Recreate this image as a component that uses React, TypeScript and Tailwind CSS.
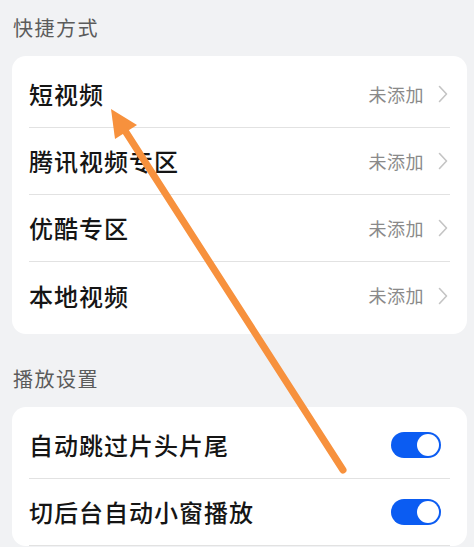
import React from 'react';

const FONT = { fontFamily: '"Noto Sans CJK SC", "Noto Sans", sans-serif' };

const shortcuts = ['短视频', '腾讯视频专区', '优酷专区', '本地视频'];
const playback = ['自动跳过片头片尾', '切后台自动小窗播放'];

const Chevron = () => (
  <svg width="10" height="18" viewBox="0 0 10 18" fill="none">
    <path d="M1.5 1.5 L8.5 9 L1.5 16.5" stroke="#c4c4c4" strokeWidth="1.6" strokeLinecap="round" strokeLinejoin="round" />
  </svg>
);

const Toggle = () => (
  <div className="w-[50px] h-[26px] rounded-full bg-[#0b5cf2] flex items-center justify-end pr-[2px]">
    <div className="w-[22px] h-[22px] rounded-full bg-white" />
  </div>
);

export default function App() {
  return (
    <div className="relative w-[474px] h-[547px] overflow-hidden bg-[#f1f2f4]" style={FONT}>
      {/* 快捷方式 */}
      <div className="h-[56px] flex items-center pl-[13px] text-[20px] tracking-[1.5px] text-[#5b5b5b]">快捷方式</div>
      <div className="ml-[12px] mr-[7px] bg-white rounded-[14px] pt-[5px] pb-[5px]">
        {shortcuts.map((label, i) => (
          <div key={label} className={`h-[67px] mx-[17px] flex items-center justify-between ${i < shortcuts.length - 1 ? 'border-b border-[#e2e2e2]' : ''}`}>
            <span className="text-[24px] font-medium tracking-[1px] text-[#151515]">{label}</span>
            <div className="flex items-center gap-[14px] pr-[2px]">
              <span className="text-[18px] tracking-[0.5px] text-[#8a8a8a]">未添加</span>
              <Chevron />
            </div>
          </div>
        ))}
      </div>

      {/* 播放设置 */}
      <div className="h-[73px] pt-[17px] flex items-center pl-[13px] text-[20px] tracking-[1.5px] text-[#5b5b5b]">播放设置</div>
      <div className="ml-[12px] mr-[7px] bg-white rounded-[14px] pt-[5px]">
        {playback.map(label => (
          <div key={label} className="h-[67px] mx-[17px] flex items-center justify-between border-b border-[#e2e2e2]">
            <span className="text-[24px] font-medium tracking-[1px] text-[#151515]">{label}</span>
            <div className="pr-[9px]">
              <Toggle />
            </div>
          </div>
        ))}
      </div>

      {/* annotation arrow */}
      <svg className="absolute inset-0 pointer-events-none" width="474" height="547" viewBox="0 0 474 547">
        <line x1="343" y1="470" x2="122" y2="126" stroke="#f7913d" strokeWidth="7" strokeLinecap="round" />
        <polygon points="111,109 137,125 115,139" fill="#f7913d" />
      </svg>
    </div>
  );
}
